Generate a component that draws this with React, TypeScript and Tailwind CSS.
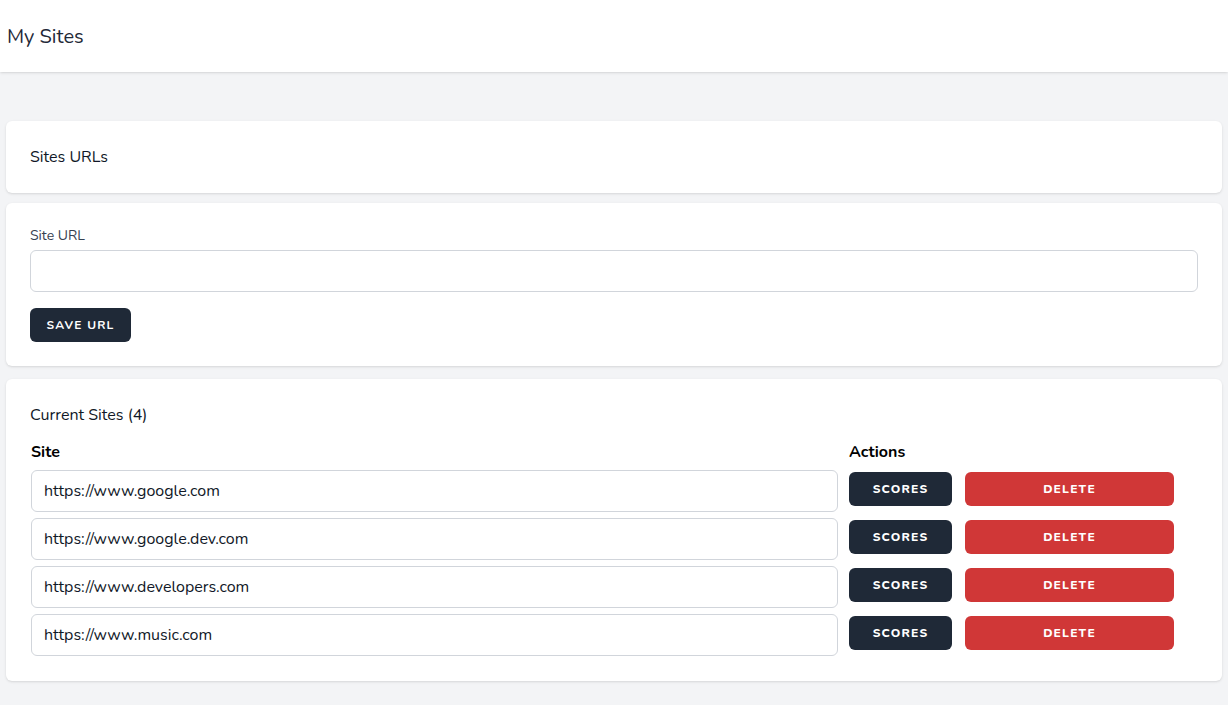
import React from "react";

const sites = [
  "https://www.google.com",
  "https://www.google.dev.com",
  "https://www.developers.com",
  "https://www.music.com",
];

export default function App() {
  return (
    <div className="min-h-[705px] bg-[#f3f4f6] text-[#111827]" style={{ fontFamily: "Nunito, Lato, 'Open Sans', sans-serif" }}>
      <header className="h-[72px] bg-white shadow flex items-center px-[7px] pt-[2px]">
        <h1 className="text-[20px] text-[#1f2937]">My Sites</h1>
      </header>
      <main className="pt-[49px] px-[6px] pb-6">
        <div className="bg-white rounded-md shadow-sm h-[72px] flex items-center px-6">
          <span className="text-[16px]">Sites URLs</span>
        </div>
        <div className="bg-white rounded-md shadow-sm mt-[10px] px-6 pt-[23px] pb-[24px]">
          <label className="block text-[14px] text-[#374151] leading-5">Site URL</label>
          <input className="mt-[4px] block w-full h-[42px] border border-[#d1d5db] rounded-md px-3" />
          <button className="mt-4 h-[34px] w-[101px] bg-[#1f2937] text-white rounded-md text-[12px] font-bold tracking-widest uppercase">
            Save URL
          </button>
        </div>
        <div className="bg-white rounded-md shadow-sm mt-[13px] px-6 pt-[24px] pb-[25px]">
          <div className="text-[16px] leading-6">Current Sites (4)</div>
          <div className="flex mt-[13px] font-bold text-[16px] leading-6 text-black">
            <div className="w-[819px] pl-[1px]">Site</div>
            <div>Actions</div>
          </div>
          <div className="mt-[6px] flex flex-col gap-[6px]">
            {sites.map((s) => (
              <div key={s} className="flex items-start">
                <input
                  readOnly
                  value={s}
                  className="ml-[1px] w-[807px] h-[42px] border border-[#d1d5db] rounded-md px-3 text-[16px] text-[#111827]"
                />
                <button className="ml-[11px] mt-[2px] w-[103px] h-[34px] bg-[#1f2937] text-white rounded-md text-[12px] font-extrabold tracking-widest">
                  SCORES
                </button>
                <button className="ml-[13px] mt-[2px] w-[209px] h-[34px] bg-[#d03737] text-white rounded-md text-[12px] font-extrabold tracking-widest">
                  DELETE
                </button>
              </div>
            ))}
          </div>
        </div>
      </main>
    </div>
  );
}
